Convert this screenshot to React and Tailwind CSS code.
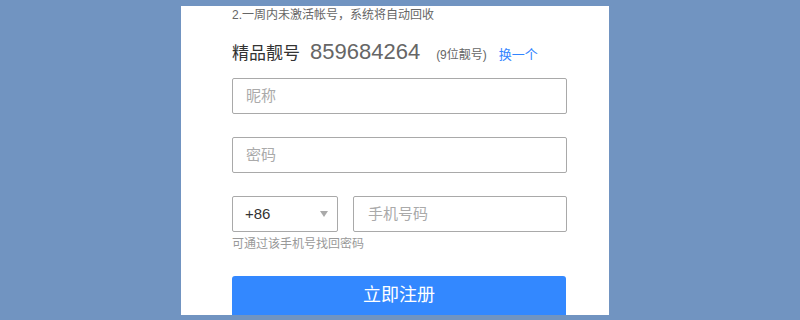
import React from 'react';

function Field({ placeholder }) {
  return (
    <div className="h-[36px] w-[335px] rounded-[2px] border border-[#a9a9a9] flex items-center pl-[13px] text-[15px] text-[#aaaaaa]">
      {placeholder}
    </div>
  );
}

export default function App() {
  return (
    <div
      className="w-[800px] h-[320px] bg-[#7194c1] flex justify-center overflow-hidden"
      style={{ fontFamily: '"Liberation Sans", "Noto Sans CJK SC", sans-serif' }}
    >
      <div className="w-[428px] mt-[6px] mb-[5px] ml-[-10px] bg-white pl-[51px] flex flex-col">
        <div className="text-[12px] leading-[16px] text-[#666666] mt-[1px]">2.一周内未激活帐号，系统将自动回收</div>
        <div className="flex items-baseline mt-[12px] h-[20px]">
          <span className="text-[17px] text-[#333333]">精品靓号</span>
          <span className="text-[22px] text-[#666666] ml-[10px]">859684264</span>
          <span className="text-[12px] text-[#666666] ml-[16px]">(9位靓号)</span>
          <span className="text-[13px] text-[#3385ff] ml-[12px]">换一个</span>
        </div>
        <div className="mt-[23px]">
          <Field placeholder="昵称" />
        </div>
        <div className="mt-[23px]">
          <Field placeholder="密码" />
        </div>
        <div className="flex mt-[23px] gap-[15px]">
          <div className="h-[36px] w-[106px] rounded-[2px] border border-[#a9a9a9] flex items-center justify-between pl-[12px] pr-[9px] text-[15px] text-[#333333]">
            <span>+86</span>
            <svg width="8" height="6" viewBox="0 0 8 6">
              <path d="M0 0 L8 0 L4 6 Z" fill="#aaaaaa" />
            </svg>
          </div>
          <div className="h-[36px] w-[214px] rounded-[2px] border border-[#a9a9a9] flex items-center pl-[14px] text-[15px] text-[#aaaaaa]">
            手机号码
          </div>
        </div>
        <div className="text-[12px] leading-[16px] text-[#999999] mt-[4px]">可通过该手机号找回密码</div>
        <div className="mt-[24px] w-[334px] flex-1 bg-[#3388ff] rounded-t-[3px] flex items-center justify-center text-[18px] text-white">
          立即注册
        </div>
      </div>
    </div>
  );
}
